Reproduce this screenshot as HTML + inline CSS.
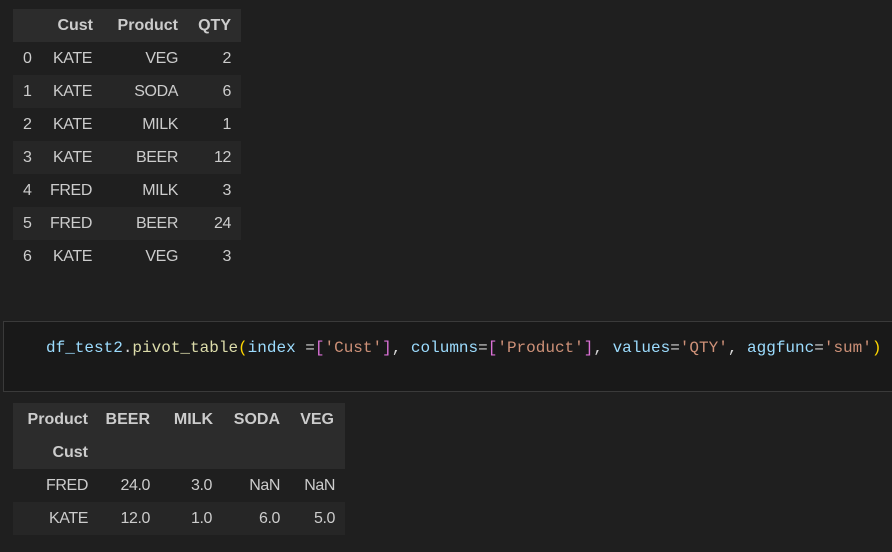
<!DOCTYPE html>
<html><head><meta charset="utf-8"><style>
body{margin:0;width:892px;height:552px;background:#1f1f1f;overflow:hidden;position:relative;font-family:"Liberation Sans",sans-serif;color:#cccccc;font-size:16px}
.r{position:absolute;left:13px;height:33px;line-height:33px}
.c{position:absolute;top:0;text-align:right;white-space:nowrap;letter-spacing:-0.4px}
.h{background:#2c2c2c;font-weight:bold}
.h .c{letter-spacing:0}
.o{background:#262626}
.code{position:absolute;left:3px;top:321px;width:889px;height:69px;border:1px solid #3a3a3a;border-right:none;background:#191919}
.code pre{margin:0;position:absolute;left:42px;top:15px;font-family:"Liberation Mono",monospace;font-size:16px;line-height:22px;color:#d4d4d4}
.v{color:#9cdcfe}.f{color:#dcdcaa}.p{color:#ffd700}.b{color:#da70d6}.s{color:#ce9178}
</style></head><body>
<div id="t1">
<div class="r h" style="top:9px;width:228px"><span class="c" style="right:148px">Cust</span><span class="c" style="right:63px">Product</span><span class="c" style="right:10px">QTY</span></div>
<div class="r" style="top:42px;width:228px"><span class="c" style="left:10px">0</span><span class="c" style="right:149px">KATE</span><span class="c" style="right:63px">VEG</span><span class="c" style="right:10px">2</span></div>
<div class="r o" style="top:75px;width:228px"><span class="c" style="left:10px">1</span><span class="c" style="right:149px">KATE</span><span class="c" style="right:63px">SODA</span><span class="c" style="right:10px">6</span></div>
<div class="r" style="top:108px;width:228px"><span class="c" style="left:10px">2</span><span class="c" style="right:149px">KATE</span><span class="c" style="right:63px">MILK</span><span class="c" style="right:10px">1</span></div>
<div class="r o" style="top:141px;width:228px"><span class="c" style="left:10px">3</span><span class="c" style="right:149px">KATE</span><span class="c" style="right:63px">BEER</span><span class="c" style="right:10px">12</span></div>
<div class="r" style="top:174px;width:228px"><span class="c" style="left:10px">4</span><span class="c" style="right:149px">FRED</span><span class="c" style="right:63px">MILK</span><span class="c" style="right:10px">3</span></div>
<div class="r o" style="top:207px;width:228px"><span class="c" style="left:10px">5</span><span class="c" style="right:149px">FRED</span><span class="c" style="right:63px">BEER</span><span class="c" style="right:10px">24</span></div>
<div class="r" style="top:240px;width:228px"><span class="c" style="left:10px">6</span><span class="c" style="right:149px">KATE</span><span class="c" style="right:63px">VEG</span><span class="c" style="right:10px">3</span></div>
</div>
<div class="code"><pre><span class="v">df_test2</span>.<span class="f">pivot_table</span><span class="p">(</span><span class="v">index</span> =<span class="b">[</span><span class="s">'Cust'</span><span class="b">]</span>, <span class="v">columns</span>=<span class="b">[</span><span class="s">'Product'</span><span class="b">]</span>, <span class="v">values</span>=<span class="s">'QTY'</span>, <span class="v">aggfunc</span>=<span class="s">'sum'</span><span class="p">)</span></pre></div>
<div id="t2">
<div class="r h" style="top:403px;width:332px"><span class="c" style="right:257px">Product</span><span class="c" style="right:195px">BEER</span><span class="c" style="right:132px">MILK</span><span class="c" style="right:65px">SODA</span><span class="c" style="right:11px">VEG</span></div>
<div class="r h" style="top:436px;width:332px"><span class="c" style="right:257px">Cust</span></div>
<div class="r" style="top:469px;width:332px"><span class="c" style="right:257px">FRED</span><span class="c" style="right:195px">24.0</span><span class="c" style="right:133px">3.0</span><span class="c" style="right:65px">NaN</span><span class="c" style="right:10px">NaN</span></div>
<div class="r o" style="top:502px;width:332px"><span class="c" style="right:257px">KATE</span><span class="c" style="right:195px">12.0</span><span class="c" style="right:133px">1.0</span><span class="c" style="right:65px">6.0</span><span class="c" style="right:10px">5.0</span></div>
</div>
</body></html>
